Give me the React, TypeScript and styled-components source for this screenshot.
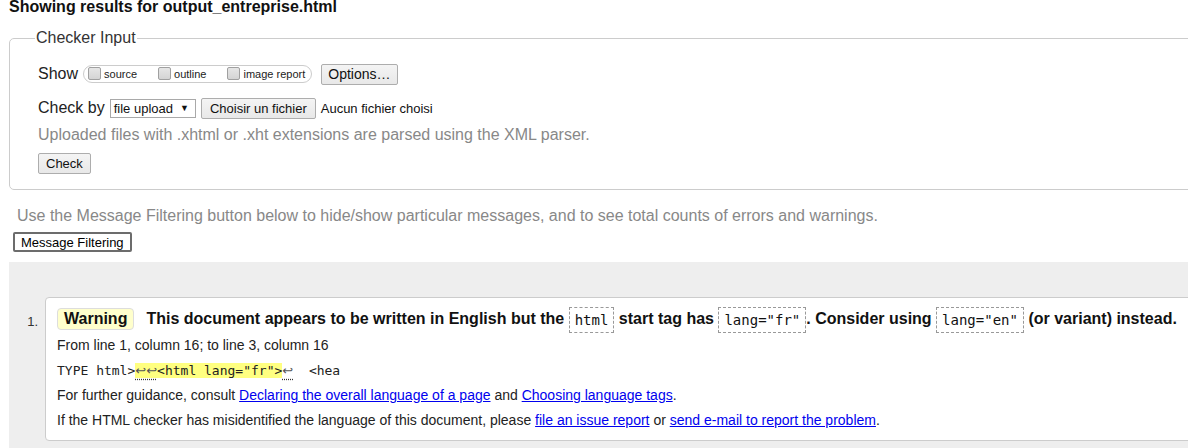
import React from "react";
import styled, { createGlobalStyle } from "styled-components";

const GlobalStyle = createGlobalStyle`
  html, body { margin: 0; padding: 0; background: #fff; overflow: hidden; }
  body { font-family: "Liberation Sans", Arial, sans-serif; color: #000; }
`;

const Page = styled.div`
  width: 1206px;
  padding-left: 9px;
`;

const Title = styled.h2`
  margin: -2px 0 0 0;
  font-size: 16px;
  line-height: 18px;
  font-weight: bold;
  color: #111;
`;

const Fieldset = styled.fieldset`
  margin: 13px 0 0 0;
  padding: 16px 0 15px 28px;
  border: 1px solid #ccc;
  border-radius: 5px;
`;

const Legend = styled.legend`
  margin-left: -3px;
  padding: 0 1px;
  font-size: 16px;
  line-height: 18px;
  color: #333;
`;

const Row = styled.div<{ $mt?: number }>`
  display: flex;
  align-items: center;
  height: 22px;
  margin-top: ${(p) => p.$mt ?? 0}px;
`;

const Label = styled.span`
  font-size: 16px;
  color: #222;
`;

const Group = styled.div`
  display: flex;
  align-items: center;
  gap: 21px;
  height: 16px;
  margin-left: 5px;
  padding: 0 6px 0 4px;
  border: 1px solid #ccc;
  border-radius: 9px;
`;

const CheckItem = styled.span`
  display: flex;
  align-items: center;
  font-size: 11px;
  color: #222;
`;

const Box = styled.span`
  display: inline-block;
  width: 11px;
  height: 11px;
  margin-right: 3px;
  margin-top: -2px;
  border: 1px solid #a0a0a0;
  border-radius: 2px;
  background: linear-gradient(#e6e6e6, #d4d4d4);
`;

const Button = styled.span<{ $ml?: number; $size?: number; $px?: number }>`
  display: inline-flex;
  align-items: center;
  box-sizing: border-box;
  height: 21px;
  margin-left: ${(p) => p.$ml ?? 0}px;
  padding: 0 ${(p) => p.$px ?? 7}px;
  border: 1px solid #adadad;
  border-radius: 2px;
  background: linear-gradient(#f4f4f4, #e8e8e8);
  font-size: ${(p) => p.$size ?? 13}px;
  color: #111;
`;

const Select = styled.span`
  display: inline-flex;
  align-items: center;
  box-sizing: border-box;
  height: 19px;
  margin-left: 5px;
  padding: 0 6px 0 3px;
  border: 1px solid #a9a9a9;
  background: #fff;
  font-size: 13px;
  color: #111;
  gap: 7px;
`;

const Arrow = styled.span`
  font-size: 9px;
`;

const Small = styled.span`
  margin-left: 5px;
  font-size: 13px;
  color: #111;
`;

const Hint = styled.div`
  margin-top: 6px;
  font-size: 16px;
  line-height: 20px;
  color: #888;
`;

const Filter = styled.div`
  margin-top: 16px;
  padding-left: 8px;
  font-size: 16px;
  line-height: 20px;
  color: #888;
`;

const FilterButton = styled.span`
  display: inline-flex;
  align-items: center;
  box-sizing: border-box;
  height: 20px;
  margin: 6px 0 0 4px;
  padding: 0 6px;
  border: 2px solid #6c6c6c;
  border-radius: 2px;
  background: #fff;
  font-size: 13px;
  color: #000;
`;

const Results = styled.div`
  margin-top: 10px;
  padding: 35px 0 30px 0;
  background: #eee;
`;

const Item = styled.div`
  display: flex;
  align-items: flex-start;
`;

const Num = styled.span`
  width: 29px;
  padding-right: 7px;
  padding-top: 15px;
  text-align: right;
  font-size: 13px;
  line-height: 19px;
  color: #333;
`;

const Card = styled.div`
  flex: 1;
  padding: 8px 0 10px 11px;
  background: #fff;
  border: 1px solid #ccc;
  border-radius: 4px;
  white-space: nowrap;
`;

const Message = styled.div`
  font-size: 16px;
  font-weight: bold;
  line-height: 26px;
  color: #111;
`;

const Badge = styled.span`
  display: inline-block;
  margin-right: 12px;
  padding: 0 6px;
  line-height: 20px;
  background: #ffc;
  border: 1px solid #ddd;
  border-radius: 4px;
`;

const Code = styled.code`
  display: inline-block;
  padding: 2px 5px;
  line-height: 20px;
  border: 1px dashed #999;
  font-family: "DejaVu Sans Mono", "Liberation Mono", monospace;
  font-size: 14px;
  font-weight: normal;
  color: #111;
  vertical-align: middle;
`;

const Para = styled.p<{ $mt?: number }>`
  margin: ${(p) => p.$mt ?? 6}px 0 0 0;
  font-size: 14px;
  line-height: 19px;
  color: #222;
`;

const Extract = styled.div`
  margin-top: 6px;
  font-family: "DejaVu Sans Mono", "Liberation Mono", monospace;
  font-size: 13px;
  line-height: 19px;
  color: #222;
  white-space: pre;
`;

const Mark = styled.span`
  background: #ffff80;
`;

const Lf = styled.span`
  font-family: "DejaVu Sans", sans-serif;
  color: #555;
  text-decoration: underline dotted #333;
  text-underline-offset: 4px;
`;

const Link = styled.a`
  color: #00e;
  text-decoration: underline;
`;

export default function App() {
  return (
    <>
      <GlobalStyle />
      <Page>
        <Title>Showing results for output_entreprise.html</Title>
        <Fieldset>
          <Legend>Checker Input</Legend>
          <Row>
            <Label>Show</Label>
            <Group>
              <CheckItem>
                <Box />
                source
              </CheckItem>
              <CheckItem>
                <Box />
                outline
              </CheckItem>
              <CheckItem>
                <Box />
                image report
              </CheckItem>
            </Group>
            <Button $ml={9} $size={14} $px={6}>Options…</Button>
          </Row>
          <Row $mt={12}>
            <Label>Check by</Label>
            <Select>
              file upload <Arrow>▼</Arrow>
            </Select>
            <Button $ml={5} $px={8}>Choisir un fichier</Button>
            <Small>Aucun fichier choisi</Small>
          </Row>
          <Hint>Uploaded files with .xhtml or .xht extensions are parsed using the XML parser.</Hint>
          <Row $mt={7}>
            <Button>Check</Button>
          </Row>
        </Fieldset>
        <Filter>
          Use the Message Filtering button below to hide/show particular messages, and to see total counts of errors and warnings.
        </Filter>
        <FilterButton>Message Filtering</FilterButton>
        <Results>
          <Item>
            <Num>1.</Num>
            <Card>
              <Message>
                <Badge>Warning</Badge>This document appears to be written in English but the <Code>html</Code> start tag has{" "}
                <Code>lang="fr"</Code>. Consider using <Code>lang="en"</Code> (or variant) instead.
              </Message>
              <Para $mt={3}>From line 1, column 16; to line 3, column 16</Para>
              <Extract>
                TYPE html&gt;
                <Mark>
                  <Lf>↩↩</Lf>&lt;html lang="fr"&gt;
                </Mark>
                <Lf>↩</Lf>{"  "}&lt;hea
              </Extract>
              <Para>
                For further guidance, consult <Link href="#">Declaring the overall language of a page</Link> and{" "}
                <Link href="#">Choosing language tags</Link>.
              </Para>
              <Para>
                If the HTML checker has misidentified the language of this document, please{" "}
                <Link href="#">file an issue report</Link> or <Link href="#">send e-mail to report the problem</Link>.
              </Para>
            </Card>
          </Item>
        </Results>
      </Page>
    </>
  );
}
